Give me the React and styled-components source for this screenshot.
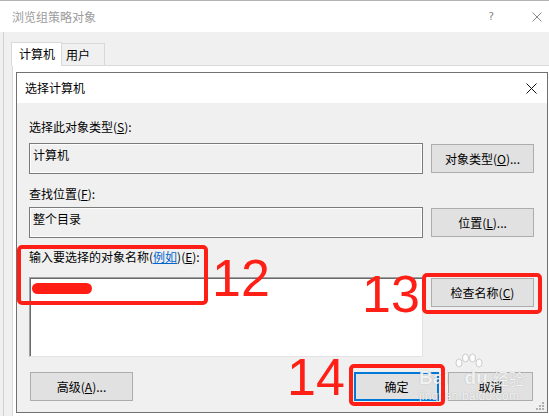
import React from "react";
import styled, { createGlobalStyle } from "styled-components";

const Global = createGlobalStyle`
  html, body { margin: 0; padding: 0; background: #f0f0f0; }
  * { box-sizing: border-box; }
`;

const Root = styled.div`
  position: relative;
  width: 549px;
  height: 416px;
  overflow: hidden;
  background: #f0f0f0;
  font-family: "Noto Sans CJK SC", "Microsoft YaHei", sans-serif;
  font-size: 12px;
  line-height: 16px;
  color: #000;
  display: flex;
  flex-direction: column;
`;

const OuterTitleBar = styled.div`
  height: 32px;
  flex: none;
  background: #fff;
  border-top: 1px solid #b4b4b4;
  display: flex;
  align-items: center;
  padding: 0 7px 0 12px;
  color: #9c9c9c;
`;

const OuterTitle = styled.span`
  flex: 1;
`;

const HelpGlyph = styled.span`
  color: #8a8a8a;
  font-family: "DejaVu Sans", sans-serif;
  font-size: 11px;
  margin-right: 38px;
`;

const OuterBody = styled.div`
  flex: 1;
  display: flex;
  padding-left: 3px;
  min-height: 0;
`;

const Frame = styled.div`
  flex: 1;
  min-width: 0;
  border-left: 1px solid #d2d2d2;
  display: flex;
  flex-direction: column;
`;

const TabStrip = styled.div`
  height: 33px;
  flex: none;
  display: flex;
  align-items: flex-end;
  padding-left: 7px;
`;

const Tab = styled.div`
  position: relative;
  z-index: ${(p) => (p.$active ? 2 : 1)};
  height: ${(p) => (p.$active ? "24px" : "22px")};
  margin-bottom: ${(p) => (p.$active ? "-1px" : "0")};
  padding: ${(p) => (p.$active ? "3px 6px 0 7px" : "3px 14px 0 4px")};
  background: ${(p) => (p.$active ? "#ffffff" : "#f0f0f0")};
  border: 1px solid #d9d9d9;
  border-bottom: none;
  border-left: ${(p) => (p.$active ? "1px solid #d9d9d9" : "none")};
  font-size: 12px;
`;

const TabPage = styled.div`
  flex: 1;
  margin-left: 8px;
  border-top: 1px solid #d9d9d9;
  border-left: 1px solid #d9d9d9;
  background: #fff;
  padding: 6px 0 0 3px;
  min-height: 0;
`;

const Dialog = styled.div`
  position: relative;
  width: 532px;
  height: 341px;
  border: 1px solid #717171;
  background: #f0f0f0;
  display: flex;
  flex-direction: column;
`;

const DialogTitle = styled.div`
  height: 30px;
  flex: none;
  background: #fff;
  display: flex;
  align-items: center;
  justify-content: space-between;
  padding: 0 10px 0 8px;
`;

const DialogBody = styled.div`
  flex: 1;
  display: flex;
  flex-direction: column;
  padding: 16px 13px 11px 12px;
`;

const Label = styled.div`
  height: 16px;
  margin-top: ${(p) => p.$mt || 0}px;
  margin-bottom: ${(p) => p.$mb || 0}px;
  white-space: nowrap;
`;

const Link = styled.span`
  color: #0066cc;
  text-decoration: underline;
`;

const FieldRow = styled.div`
  display: grid;
  grid-template-columns: 394px 103px;
  column-gap: 8px;
  align-items: ${(p) => (p.$top ? "start" : "center")};
`;

const ReadBox = styled.div`
  height: 31px;
  border: 1px solid #7a7a7a;
  box-shadow: inset 0 0 0 1px #fdfdfd;
  background: #f0f0f0;
  padding: 3px 3px;
`;

const NameArea = styled.div`
  height: 80px;
  background: #fff;
  border: 1px solid;
  border-color: #a0a0a0 #e3e3e3 #e3e3e3 #a0a0a0;
  box-shadow: inset 1px 1px 0 #6a6a6a;
  padding: 5px 2px;
`;

const Redact = styled.span`
  display: block;
  width: 60px;
  height: 11px;
  border-radius: 6px;
  background: #ff1d14;
`;

const Button = styled.div`
  height: 29px;
  width: ${(p) => p.$w || 103}px;
  margin-top: ${(p) => p.$mt || 0}px;
  background: #e1e1e1;
  border: 1px solid ${(p) => (p.$default ? "#0078d7" : "#adadad")};
  box-shadow: ${(p) => (p.$default ? "inset 0 0 0 1px #0078d7" : "none")};
  display: flex;
  align-items: center;
  justify-content: center;
  white-space: nowrap;
`;

const BottomRow = styled.div`
  margin-top: 15px;
  display: flex;
  align-items: center;
  padding: 0 1px;
  gap: 9px;
`;

const Spacer = styled.div`
  flex: 1;
`;

const Grip = styled.svg`
  position: absolute;
  right: 2px;
  bottom: 1px;
`;

const Annot = styled.div`
  position: absolute;
  left: ${(p) => p.$x}px;
  top: ${(p) => p.$y}px;
  width: ${(p) => p.$w}px;
  height: ${(p) => p.$h}px;
  border: 4px solid #fe1f16;
  border-radius: 5px;
  z-index: 10;
`;

const Num = styled.div`
  position: absolute;
  left: ${(p) => p.$x}px;
  top: ${(p) => p.$y}px;
  font-family: "Liberation Sans", Arial, sans-serif;
  font-size: 52px;
  line-height: 1;
  color: #fe1f16;
  z-index: 10;
`;

const Watermark = styled.div`
  position: absolute;
  left: 419px;
  top: 353px;
  width: 108px;
  color: rgba(255, 255, 255, 0.85);
  text-shadow: 0 0 1px rgba(110, 110, 110, 0.5);
  font-family: "Liberation Sans", sans-serif;
  z-index: 5;
  pointer-events: none;
`;

const WmMain = styled.div`
  display: flex;
  align-items: flex-end;
  margin-top: 15px;
  font-size: 19px;
  line-height: 20px;
  font-weight: bold;
`;

const WmDu = styled.span`
  margin-left: 16px;
`;

const WmCn = styled.span`
  font-family: "Noto Sans CJK SC", sans-serif;
  font-size: 16px;
  line-height: 20px;
  font-weight: normal;
  margin-left: 5px;
`;

const WmUrl = styled.div`
  font-size: 12px;
  line-height: 13px;
  letter-spacing: 0.2px;
  margin-top: 2px;
`;

const Paw = styled.svg`
  position: absolute;
  left: 36px;
  top: 0;
`;

const Acc = ({ k }) => (
  <>
    (<u>{k}</u>)
  </>
);

export default function App() {
  return (
    <>
      <Global />
      <Root>
        <OuterTitleBar>
          <OuterTitle>浏览组策略对象</OuterTitle>
          <HelpGlyph>?</HelpGlyph>
          <svg width="10" height="10" viewBox="0 0 10 10">
            <path d="M0.5 0.5 L9.5 9.5 M9.5 0.5 L0.5 9.5" stroke="#8a8a8a" strokeWidth="1" />
          </svg>
        </OuterTitleBar>
        <OuterBody>
          <Frame>
            <TabStrip>
              <Tab $active>计算机</Tab>
              <Tab>用户</Tab>
            </TabStrip>
            <TabPage>
              <Dialog>
                <DialogTitle>
                  <span>选择计算机</span>
                  <svg width="11" height="11" viewBox="0 0 11 11">
                    <path d="M0.5 0.5 L10.5 10.5 M10.5 0.5 L0.5 10.5" stroke="#111" strokeWidth="1" />
                  </svg>
                </DialogTitle>
                <DialogBody>
                  <Label $mb={8}>
                    选择此对象类型<Acc k="S" />:
                  </Label>
                  <FieldRow>
                    <ReadBox>计算机</ReadBox>
                    <Button>
                      对象类型<Acc k="O" />...
                    </Button>
                  </FieldRow>
                  <Label $mt={12} $mb={5}>
                    查找位置<Acc k="F" />:
                  </Label>
                  <FieldRow>
                    <ReadBox>整个目录</ReadBox>
                    <Button>
                      位置<Acc k="L" />...
                    </Button>
                  </FieldRow>
                  <Label $mt={11} $mb={12}>
                    输入要选择的对象名称(<Link>例如</Link>)<Acc k="E" />:
                  </Label>
                  <FieldRow $top>
                    <NameArea>
                      <Redact />
                    </NameArea>
                    <Button $mt={1}>
                      检查名称<Acc k="C" />
                    </Button>
                  </FieldRow>
                  <BottomRow>
                    <Button>
                      高级<Acc k="A" />...
                    </Button>
                    <Spacer />
                    <Button $w={85} $default>
                      确定
                    </Button>
                    <Button $w={85}>取消</Button>
                  </BottomRow>
                </DialogBody>
                <Grip width="9" height="9" viewBox="0 0 9 9">
                  <g fill="#b0b0b0">
                    <rect x="6" y="0" width="2" height="2" />
                    <rect x="3" y="3" width="2" height="2" />
                    <rect x="6" y="3" width="2" height="2" />
                    <rect x="0" y="6" width="2" height="2" />
                    <rect x="3" y="6" width="2" height="2" />
                    <rect x="6" y="6" width="2" height="2" />
                  </g>
                </Grip>
              </Dialog>
            </TabPage>
          </Frame>
        </OuterBody>

        <Watermark>
          <Paw width="28" height="18" viewBox="0 0 28 18">
            <g fill="rgba(255,255,255,0.8)" stroke="rgba(130,130,130,0.45)" strokeWidth="0.8">
              <ellipse cx="4" cy="10" rx="3" ry="4" />
              <ellipse cx="10.5" cy="5" rx="3" ry="4" />
              <ellipse cx="17.5" cy="5" rx="3" ry="4" />
              <ellipse cx="24" cy="10" rx="3" ry="4" />
            </g>
          </Paw>
          <WmMain>
            <span>Bai</span>
            <WmDu>du</WmDu>
            <WmCn>经验</WmCn>
          </WmMain>
          <WmUrl>jingyan.baidu.com</WmUrl>
        </Watermark>

        <Annot $x={17} $y={245} $w={191} $h={60} />
        <Annot $x={422} $y={273} $w={120} $h={41} />
        <Annot $x={349} $y={364} $w={96} $h={42} />
        <Num $x={212} $y={252}>12</Num>
        <Num $x={362} $y={268}>13</Num>
        <Num $x={287} $y={351}>14</Num>
      </Root>
    </>
  );
}
